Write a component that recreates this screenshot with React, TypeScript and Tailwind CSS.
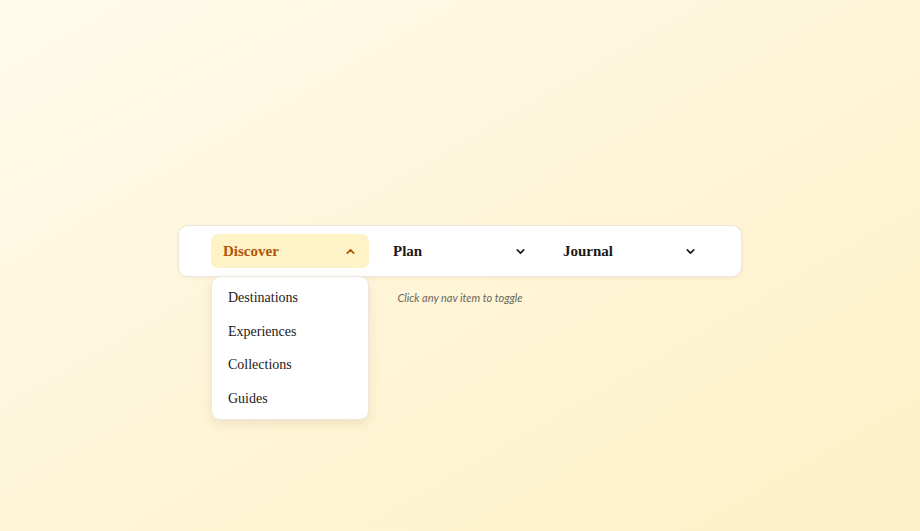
import * as React from "react";
import { ChevronDown, ChevronUp } from "lucide-react";

const navItems = [
  { id: "discover", label: "Discover", links: ["Destinations", "Experiences", "Collections", "Guides"] },
  { id: "plan", label: "Plan", links: ["Itineraries", "Bookings", "Budget"] },
  { id: "journal", label: "Journal", links: ["Stories", "Photos", "Notes"] },
];

export default function App() {
  const [open, setOpen] = React.useState<string | null>("discover");

  return (
    <div className="min-h-screen w-full flex items-center justify-center bg-gradient-to-br from-[#fffbeb] to-[#fef0c6] font-['Liberation_Serif',serif]">
      <div className="flex flex-col items-center">
        <nav className="flex gap-3 px-[32px] py-2 bg-white border border-[#ece7dc] rounded-[10px] shadow-[0_1px_4px_rgba(120,90,20,0.08)]">
          {navItems.map((item) => {
            const isOpen = open === item.id;
            return (
              <div key={item.id} className="relative">
                <button
                  type="button"
                  onClick={() => setOpen(isOpen ? null : item.id)}
                  className={`w-[158px] h-[34px] flex items-center justify-between px-3 rounded-[7px] text-[15px] font-bold ${
                    isOpen ? "bg-[#fef3c7] text-[#b45309]" : "text-[#1c1917]"
                  }`}
                >
                  <span>{item.label}</span>
                  {isOpen ? (
                    <ChevronUp className="w-[13px] h-[13px]" strokeWidth={3} />
                  ) : (
                    <ChevronDown className="w-[13px] h-[13px]" strokeWidth={3} />
                  )}
                </button>
                {isOpen && (
                  <ul className="absolute left-0 top-[42px] w-[158px] py-[4px] bg-white border border-[#ece7dc] rounded-[9px] shadow-[0_4px_12px_rgba(120,90,20,0.12)] z-10">
                    {item.links.map((link) => (
                      <li key={link} className="h-[33.5px] flex items-center px-4 text-[14px] text-[#1c1917]">
                        {link}
                      </li>
                    ))}
                  </ul>
                )}
              </div>
            );
          })}
        </nav>
        <p className="mt-[13px] h-4 leading-4 text-[11px] italic text-[#6b655c] font-['Lato',sans-serif]">
          Click any nav item to toggle
        </p>
      </div>
    </div>
  );
}
